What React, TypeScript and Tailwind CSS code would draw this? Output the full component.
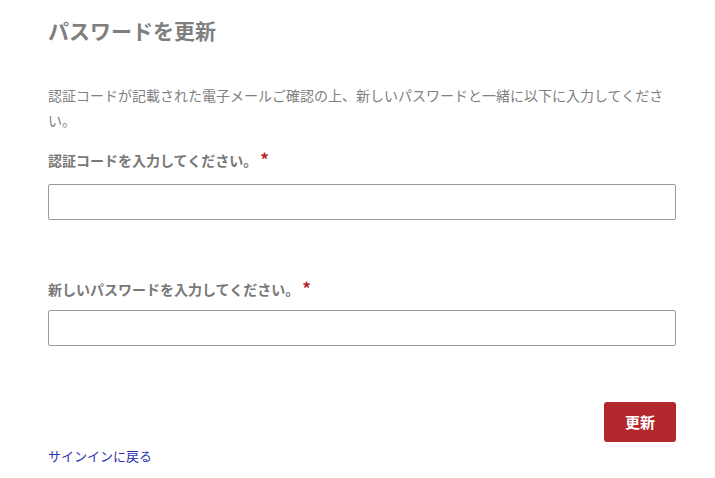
export default function App() {
  const font = { fontFamily: '"Noto Sans CJK JP", "Noto Sans", sans-serif' };
  return (
    <div className="min-h-screen bg-white" style={font}>
      <div className="ml-[48px] w-[628px]">
        <h1 className="pt-[15px] text-[21px] leading-[30px] font-bold text-[#7f7f7f]">
          パスワードを更新
        </h1>
        <p className="mt-[38px] text-[14px] leading-[25px] text-[#808080]">
          認証コードが記載された電子メールご確認の上、新しいパスワードと一緒に以下に入力してください。
        </p>
        <form>
          <label className="mt-[17px] block h-[20px] text-[14px] leading-[20px] font-bold text-[#787878]">
            認証コードを入力してください。
            <span className="ml-[3px] text-[17px] leading-none text-[#b3282d]">*</span>
          </label>
          <input
            type="text"
            className="mt-[14px] block h-[36px] w-full rounded-[2px] border border-[#9a9a9a] px-2 outline-none"
          />
          <label className="mt-[59px] block h-[20px] text-[14px] leading-[20px] font-bold text-[#787878]">
            新しいパスワードを入力してください。
            <span className="ml-[3px] text-[17px] leading-none text-[#b3282d]">*</span>
          </label>
          <input
            type="password"
            className="mt-[11px] block h-[36px] w-full rounded-[2px] border border-[#9a9a9a] px-2 outline-none"
          />
          <div className="mt-[56px] flex justify-end">
            <button
              type="submit"
              className="h-[40px] w-[72px] rounded-[3px] bg-[#b3282d] text-[15px] font-bold text-white"
            >
              更新
            </button>
          </div>
        </form>
        <a href="#" className="mt-[4px] block w-fit text-[13px] leading-[20px] text-[#2b30b0]">
          サインインに戻る
        </a>
      </div>
    </div>
  );
}
